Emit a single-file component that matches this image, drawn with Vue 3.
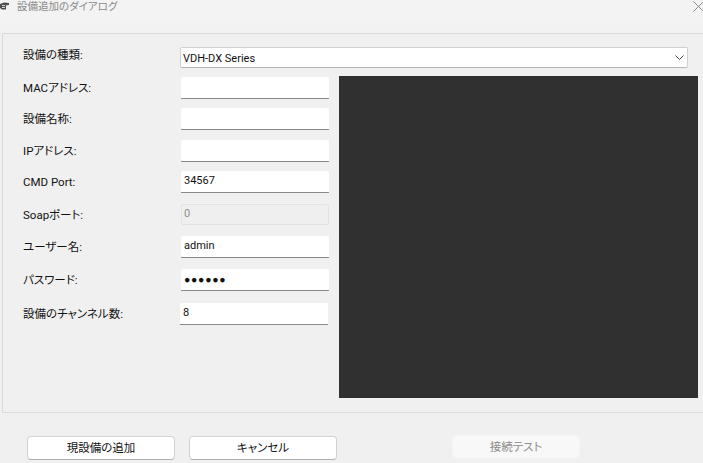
<script setup>
const fields = [
  { label: 'MACアドレス:', value: '' },
  { label: '設備名称:', value: '' },
  { label: 'IPアドレス:', value: '' },
  { label: 'CMD Port:', value: '34567' },
  { label: 'Soapポート:', value: '0', kind: 'disabled' },
  { label: 'ユーザー名:', value: 'admin' },
  { label: 'パスワード:', value: '●●●●●●', kind: 'password' },
  { label: '設備のチャンネル数:', value: '8', kind: 'shifted' },
]
</script>

<template>
  <div class="dialog">
    <header class="titlebar">
      <svg class="app-icon" width="10" height="10" viewBox="0 0 10 10">
        <path d="M0 3 L4 1.5 L9 2 L9 4 L6 4.5 L6 8.5 L2 8.5 L0 7 Z" fill="#505050" />
        <path d="M2 4.5 H5 M2 6.5 H5" stroke="#d8d8d8" stroke-width="1" />
      </svg>
      <span class="title">設備追加のダイアログ</span>
      <svg class="close" width="11" height="11" viewBox="0 0 11 11">
        <path d="M0.5 0.5 L10.5 10.5 M10.5 0.5 L0.5 10.5" stroke="#8c8c8c" stroke-width="1" fill="none" />
      </svg>
    </header>

    <section class="panel">
      <div class="label first">設備の種類:</div>
      <div class="combo">
        <span class="combo-text">VDH-DX Series</span>
        <svg width="9" height="5" viewBox="0 0 9 5">
          <path d="M0.5 0.5 L4.5 4.5 L8.5 0.5" stroke="#444" stroke-width="1" fill="none" />
        </svg>
      </div>

      <div class="preview"></div>

      <template v-for="field in fields" :key="field.label">
        <div class="label">{{ field.label }}</div>
        <div class="input" :class="field.kind">{{ field.value }}</div>
      </template>
    </section>

    <footer class="actions">
      <button class="btn" type="button">現設備の追加</button>
      <button class="btn" type="button">キャンセル</button>
      <button class="btn test" type="button" disabled>接続テスト</button>
    </footer>
  </div>
</template>

<style scoped>
.dialog {
  width: 703px;
  height: 463px;
  overflow: hidden;
  background: #f0f0f0;
  color: #111;
  font-family: Roboto, "Noto Sans CJK JP", sans-serif;
  font-size: 11px;
}
.titlebar {
  height: 33px;
  box-sizing: border-box;
  display: flex;
  align-items: flex-start;
  background: linear-gradient(#f3f3f3 55%, #f1f1f1);
  position: relative;
}
.app-icon {
  margin-top: 1px;
  flex: none;
}
.title {
  margin: 0 0 0 7px;
  color: #8a8a8a;
  font-size: 10.5px;
  line-height: 14px;
  font-feature-settings: "palt";
}
.close {
  position: absolute;
  left: 693px;
  top: 1px;
}
.panel {
  width: 703px;
  height: 380px;
  box-sizing: border-box;
  margin-left: 2px;
  padding: 13px 0 0 20px;
  border: 1px solid #dadada;
  border-right: 0;
  display: grid;
  grid-template-columns: 158px 148px 359px;
  grid-template-rows: 30px 31px 32px 31px 33px 32px 33px 34px 95px;
  align-items: start;
}
.label {
  grid-column: 1;
  height: 22px;
  line-height: 22px;
  white-space: nowrap;
  font-size: 11.5px;
  font-feature-settings: "palt";
}
.label.first {
  margin-top: -3px;
}
.combo {
  grid-column: 2 / 4;
  grid-row: 1;
  width: 508px;
  height: 21px;
  box-sizing: border-box;
  margin-left: -1px;
  padding: 0 3px 0 2px;
  display: flex;
  align-items: center;
  justify-content: space-between;
  background: #fff;
  border: 1px solid #d0d0d0;
  border-bottom-color: #b4b4b4;
  border-radius: 2px;
}
.combo-text {
  padding-top: 1px;
}
.preview {
  grid-column: 3;
  grid-row: 2 / span 8;
  width: 359px;
  height: 322px;
  margin: -1px 0 0 10px;
  background: #303030;
}
.input {
  grid-column: 2;
  width: 148px;
  height: 22px;
  box-sizing: border-box;
  padding: 1px 3px 2px;
  line-height: 18px;
  background: #fff;
  border-bottom: 1px solid #8a8a8a;
  border-radius: 2px 2px 0 0;
}
.input.disabled {
  height: 21px;
  background: #efefef;
  border: 1px solid #e2e2e2;
  border-radius: 2px;
  padding: 0 2px;
  color: #909090;
}
.input.password {
  font-family: "Liberation Sans", sans-serif;
  font-size: 10.5px;
  letter-spacing: 0.7px;
}
.input.shifted {
  margin-left: -1px;
}
.actions {
  display: flex;
  align-items: flex-start;
  padding: 23px 0 0 27px;
}
.btn {
  width: 148px;
  height: 24px;
  padding: 0 0 2px;
  margin-right: 14px;
  background: #fff;
  border: 1px solid #d2d2d2;
  border-bottom-color: #b0b0b0;
  border-radius: 4px;
  color: #111;
  font: inherit;
  font-size: 11.5px;
  font-feature-settings: "palt";
}
.btn.test {
  width: 128px;
  height: 23px;
  margin: -1px 0 0 101px;
  background: #f8f8f8;
  border: 1px solid #f4f4f4;
  color: #8c8c8c;
}
</style>
